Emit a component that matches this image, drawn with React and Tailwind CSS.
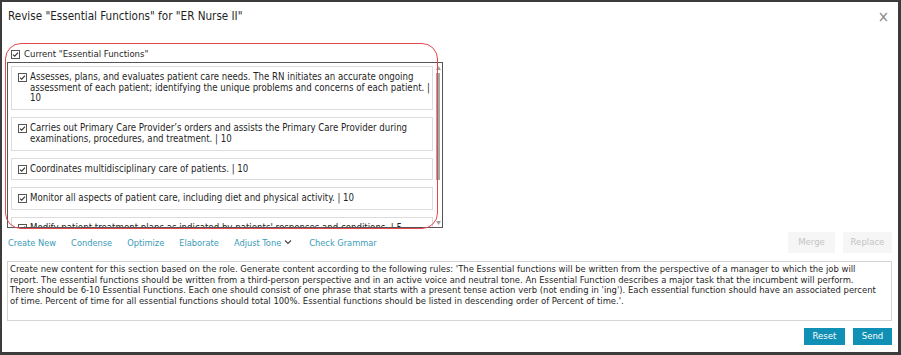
import React from 'react'

const font = { fontFamily: '"DejaVu Sans Condensed", "DejaVu Sans", sans-serif' }

const CheckBox = ({ className = '' }) => (
  <svg width="9" height="9" viewBox="0 0 9 9" className={`shrink-0 ${className}`}>
    <rect x="0.5" y="0.5" width="8" height="8" fill="#fff" stroke="#555" strokeWidth="1" />
    <path d="M2 4.6 L3.7 6.2 L7 2.6" fill="none" stroke="#333" strokeWidth="1.1" />
  </svg>
)

const items = [
  [
    'Assesses, plans, and evaluates patient care needs. The RN initiates an accurate ongoing',
    'assessment of each patient; identifying the unique problems and concerns of each patient. |',
    '10',
  ],
  [
    'Carries out Primary Care Provider\u2019s orders and assists the Primary Care Provider during',
    'examinations, procedures, and treatment. | 10',
  ],
  ['Coordinates multidisciplinary care of patients. | 10'],
  ['Monitor all aspects of patient care, including diet and physical activity. | 10'],
  ["Modify patient treatment plans as indicated by patients' responses and conditions. | 5"],
]

const prompt = [
  "Create new content for this section based on the role. Generate content according to the following rules: 'The Essential functions will be written from the perspective of a manager to which the job will",
  'report. The essential functions should be written from a third-person perspective and in an active voice and neutral tone. An Essential Function describes a major task that the incumbent will perform.',
  "There should be 6-10 Essential Functions. Each one should consist of one phrase that starts with a present tense action verb (not ending in 'ing'). Each essential function should have an associated percent",
  "of time. Percent of time for all essential functions should total 100%. Essential functions should be listed in descending order of Percent of time.'.",
]

const actions = ['Create New', 'Condense', 'Optimize', 'Elaborate']

export default function App() {
  return (
    <div className="w-[901px] h-[355px] bg-white border-l-2 border-t-2 border-r-[3px] border-b-[3px] border-[#3c3c3c] relative overflow-hidden text-[#1f1f1f]" style={font}>
      <div className="pl-[5px] pr-[6px] flex flex-col">
        {/* Title */}
        <div className="h-[30px] flex items-center justify-between">
          <span className="text-[11.6px] pl-[1px]">Revise "Essential Functions" for "ER Nurse II"</span>
          <span className="text-[15px] text-[#888] mr-[3px] leading-none">×</span>
        </div>

        {/* Section label */}
        <div className="mt-[15px] h-[14px] flex items-center gap-[4px] pl-[4px] text-[9.5px]">
          <CheckBox />
          <span>Current "Essential Functions"</span>
        </div>

        {/* List */}
        <div className="mt-[1px] h-[166px] w-[436px] border border-[#555] flex overflow-hidden">
          <div className="flex-1 min-w-0 flex flex-col gap-[7px] pl-[3px] pr-[1px] pt-[3px]">
            {items.map((lines, i) => (
              <div key={i} className="shrink-0 border border-[#dcdcdc] flex gap-[3px] pl-[6px] py-[5px] text-[9.6px] leading-[10.7px] overflow-hidden">
                <CheckBox className="mt-[1px]" />
                <div className="whitespace-nowrap">
                  {lines.map((l, j) => (
                    <div key={j}>{l}</div>
                  ))}
                </div>
              </div>
            ))}
          </div>
          {/* Scrollbar */}
          <div className="w-[8px] flex flex-col items-center pt-[3px] pb-[2px]">
            <svg width="5" height="4" viewBox="0 0 5 4"><path d="M0 4 L2.5 0 L5 4Z" fill="#a0a0a0" /></svg>
            <div className="w-[4px] h-[107px] mt-[3px] bg-[#a6a6a6]" />
            <div className="flex-1" />
            <svg width="5" height="4" viewBox="0 0 5 4"><path d="M0 0 L5 0 L2.5 4Z" fill="#a0a0a0" /></svg>
          </div>
        </div>

        {/* Actions */}
        <div className="mt-[3px] h-[23px] flex items-center justify-between">
          <div className="flex items-center gap-[15px] pl-[1px] text-[9.2px] text-[#3a9bb8]">
            {actions.map(a => (
              <span key={a}>{a}</span>
            ))}
            <span className="flex items-center gap-[3px]">
              Adjust Tone
              <svg width="8" height="6" viewBox="0 0 8 6"><path d="M1 1.5 L4 4.5 L7 1.5" fill="none" stroke="#444" strokeWidth="1.1" /></svg>
            </span>
            <span className="ml-[2px]">Check Grammar</span>
          </div>
          <div className="flex gap-[8px] text-[9.5px] text-[#c4c4c4]">
            <div className="w-[47px] h-[21px] bg-[#f6f6f6] flex items-center justify-center">Merge</div>
            <div className="w-[49px] h-[21px] bg-[#f6f6f6] flex items-center justify-center">Replace</div>
          </div>
        </div>

        {/* Prompt */}
        <div className="mt-[7px] h-[60px] border border-[#d4d4d4] px-[2px] pt-[2px] text-[9.4px] leading-[10.7px] whitespace-nowrap overflow-hidden">
          {prompt.map((l, i) => (
            <div key={i}>{l}</div>
          ))}
        </div>

        {/* Buttons */}
        <div className="mt-[7px] flex justify-end gap-[8px] text-[9.5px] text-white">
          <div className="w-[41px] h-[17px] bg-[#1190b5] flex items-center justify-center">Reset</div>
          <div className="w-[39px] h-[17px] bg-[#1190b5] flex items-center justify-center">Send</div>
        </div>
      </div>

      {/* Red annotation ring */}
      <div className="absolute left-[3px] top-[41px] w-[433px] h-[186px] rounded-[16px] border-[1.5px] border-[#e5474f] pointer-events-none" />
    </div>
  )
}
